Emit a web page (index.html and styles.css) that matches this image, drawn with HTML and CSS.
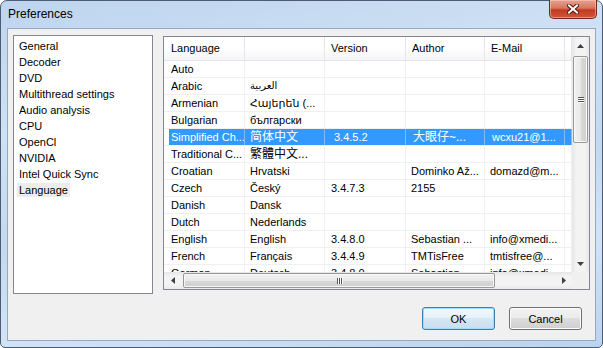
FILE: index.html
```html
<!DOCTYPE html>
<html lang="en">
<head>
  <meta charset="UTF-8">
  <title>Preferences</title>
  <link rel="stylesheet" href="styles.css">
</head>
<body>
  <div class="window">
    <div class="titlebar">
      <span class="title">Preferences</span>
      <div class="close">
        <svg width="12" height="10" viewBox="0 0 12 10">
          <path d="M2 1.5 L10 8.5 M10 1.5 L2 8.5" stroke="#4a1a12" stroke-width="4" stroke-linecap="square"/>
          <path d="M2 1.5 L10 8.5 M10 1.5 L2 8.5" stroke="#fff" stroke-width="2" stroke-linecap="square"/>
        </svg>
      </div>
    </div>

    <div class="client">
      <div class="main">
        <!-- Lista de seções -->
        <ul class="tree">
          <li><span>General</span></li>
          <li><span>Decoder</span></li>
          <li><span>DVD</span></li>
          <li><span>Multithread settings</span></li>
          <li><span>Audio analysis</span></li>
          <li><span>CPU</span></li>
          <li><span>OpenCl</span></li>
          <li><span>NVIDIA</span></li>
          <li><span>Intel Quick Sync</span></li>
          <li class="current"><span>Language</span></li>
        </ul>

        <div class="listview">
          <div class="lv-body">
            <div class="lv-header">
              <span>Language</span><span></span><span>Version</span><span>Author</span><span>E-Mail</span><span></span>
            </div>
            <div class="lv-row"><span>Auto</span><span></span><span></span><span></span><span></span><span></span></div>
            <div class="lv-row"><span>Arabic</span><span class="ar"><bdi dir="rtl">العربية</bdi></span><span></span><span></span><span></span><span></span></div>
            <div class="lv-row"><span>Armenian</span><span>Հայերեն (...</span><span></span><span></span><span></span><span></span></div>
            <div class="lv-row"><span>Bulgarian</span><span>български</span><span></span><span></span><span></span><span></span></div>
            <div class="lv-row selected"><span>Simplified Ch...</span><span class="cjk">简体中文</span><span>3.4.5.2</span><span class="cjk">大眼仔~...</span><span>wcxu21@1...</span><span></span></div>
            <div class="lv-row"><span>Traditional C...</span><span class="cjk">繁體中文...</span><span></span><span></span><span></span><span></span></div>
            <div class="lv-row"><span>Croatian</span><span>Hrvatski</span><span></span><span>Dominko Až...</span><span>domazd@m...</span><span></span></div>
            <div class="lv-row"><span>Czech</span><span>Český</span><span>3.4.7.3</span><span>2155</span><span></span><span></span></div>
            <div class="lv-row"><span>Danish</span><span>Dansk</span><span></span><span></span><span></span><span></span></div>
            <div class="lv-row"><span>Dutch</span><span>Nederlands</span><span></span><span></span><span></span><span></span></div>
            <div class="lv-row"><span>English</span><span>English</span><span>3.4.8.0</span><span>Sebastian ...</span><span>info@xmedi...</span><span></span></div>
            <div class="lv-row"><span>French</span><span>Français</span><span>3.4.4.9</span><span>TMTisFree</span><span>tmtisfree@...</span><span></span></div>
            <div class="lv-row"><span>German</span><span>Deutsch</span><span>3.4.8.0</span><span>Sebastian ...</span><span>info@xmedi...</span><span></span></div>
          </div>

          <!-- Barra de rolagem vertical -->
          <div class="vscroll">
            <div class="sb-btn">
              <svg width="7" height="4" viewBox="0 0 7 4"><path d="M0 4 L3.5 0 L7 4 Z" fill="#404040"/></svg>
            </div>
            <div class="sb-track">
              <div class="thumb-v"><i></i><i></i><i></i></div>
            </div>
            <div class="sb-btn">
              <svg width="7" height="4" viewBox="0 0 7 4"><path d="M0 0 L3.5 4 L7 0 Z" fill="#404040"/></svg>
            </div>
          </div>

          <!-- Barra de rolagem horizontal -->
          <div class="hscroll">
            <div class="sb-btn">
              <svg width="4" height="7" viewBox="0 0 4 7"><path d="M4 0 L0 3.5 L4 7 Z" fill="#404040"/></svg>
            </div>
            <div class="sb-track">
              <div class="thumb-h"><i></i><i></i><i></i></div>
            </div>
            <div class="sb-btn">
              <svg width="4" height="7" viewBox="0 0 4 7"><path d="M0 0 L4 3.5 L0 7 Z" fill="#404040"/></svg>
            </div>
          </div>
          <div class="corner"></div>
        </div>
      </div>

      <div class="buttons">
        <button class="btn btn-default">OK</button>
        <button class="btn">Cancel</button>
      </div>
    </div>
  </div>
</body>
</html>
```

FILE: styles.css
```css
* {
  margin: 0;
  padding: 0;
  box-sizing: border-box;
}

body {
  background-color: #ffffff;
  font-family: "Liberation Sans", "DejaVu Sans", "Noto Sans CJK SC", sans-serif;
  font-size: 11px;
  color: #000;
}

.window {
  width: 603px;
  height: 348px;
  border: 1px solid #4c5c72;
  border-radius: 7px 7px 5px 5px;
  padding: 0 6px 6px 6px;
  background: linear-gradient(170deg, #bed5ef 0%, #cfe1f4 30%, #c3d9f1 55%, #d2e3f5 75%, #bcd3ee 100%);
  display: flex;
  flex-direction: column;
}

.titlebar {
  height: 27px;
  margin: 0 -6px;
  display: flex;
  justify-content: space-between;
  align-items: flex-start;
}

.title {
  padding-left: 7px;
  line-height: 27px;
  font-size: 12px;
  color: #000;
}

.close {
  width: 48px;
  height: 19px;
  margin-top: -1px;
  margin-right: 5px;
  border: 1px solid #6b2a1e;
  border-top: none;
  border-radius: 0 0 5px 5px;
  background: linear-gradient(#e7a291 0%, #d6775f 45%, #c23b22 55%, #cf5636 100%);
  box-shadow: inset 0 0 0 1px rgba(255, 210, 200, 0.5);
  display: flex;
  align-items: center;
  justify-content: center;
}

.client {
  flex: 1;
  border: 1px solid #93a8c2;
  background-color: #f0f0f0;
  padding: 6px 5px 0 5px;
}

.main {
  display: flex;
  gap: 10px;
  height: 259px;
}

.tree {
  list-style: none;
  width: 140px;
  height: 259px;
  background-color: #fff;
  border: 1px solid #828790;
  padding-top: 1px;
}

.tree li {
  height: 16px;
  line-height: 16px;
  padding-left: 3px;
}

.tree li span {
  display: inline-block;
  padding: 0 2px;
  line-height: 14px;
  vertical-align: middle;
}

.tree li.current span {
  background-color: #ececec;
}

.listview {
  width: 427px;
  height: 254px;
  margin-top: 1px;
  border: 1px solid #828790;
  background-color: #fff;
  display: grid;
  grid-template-columns: 408px 17px;
  grid-template-rows: 235px 17px;
}

.lv-body {
  overflow: hidden;
}

.lv-header, .lv-row {
  display: grid;
  grid-template-columns: 81px 80px 81px 79px 80px 1fr;
}

.lv-header {
  height: 24px;
  background: linear-gradient(#ffffff 0%, #ffffff 45%, #f4f5f7 100%);
  border-bottom: 1px solid #e5e5e5;
}

.lv-header span {
  line-height: 23px;
  padding-left: 6px;
  border-right: 1px solid #e5e5e5;
  white-space: nowrap;
}

.lv-header span:first-child {
  padding-left: 7px;
}

.lv-row {
  height: 17px;
  border-bottom: 1px solid #f0f0f0;
}

.lv-row span {
  line-height: 16px;
  padding-left: 5px;
  border-right: 1px solid #f0f0f0;
  white-space: nowrap;
  overflow: hidden;
  text-align: left;
}

.lv-row span:first-child {
  padding-left: 7px;
}

.lv-row span:nth-child(3) {
  padding-left: 6px;
}

.lv-row .cjk {
  font-size: 12px;
}

.lv-row .ar {
  font-family: "DejaVu Sans", sans-serif;
  font-size: 10px;
}

.lv-row.selected span {
  background-color: #3399ff;
  color: #fff;
  border-right-color: #7fbcf8;
}

.lv-row.selected span:first-child {
  background: linear-gradient(to right, #fff 5px, #3399ff 5px);
}

.lv-row.selected span:nth-child(3) {
  padding-left: 9px;
}

.lv-row.selected span:nth-child(4),
.lv-row.selected span:nth-child(5) {
  padding-left: 7px;
}

/* Barras de rolagem */
.vscroll {
  display: flex;
  flex-direction: column;
  background: linear-gradient(to right, #e6e6e6, #f3f3f3 25%, #f3f3f3 75%, #e9e9e9);
}

.hscroll {
  display: flex;
  background: linear-gradient(#e6e6e6, #f3f3f3 25%, #f3f3f3 75%, #e9e9e9);
}

.corner {
  background-color: #f0f0f0;
}

.sb-btn {
  width: 17px;
  height: 17px;
  display: flex;
  align-items: center;
  justify-content: center;
  flex-shrink: 0;
}

.sb-track {
  flex: 1;
  display: flex;
}

.vscroll .sb-track {
  flex-direction: column;
}

.thumb-v, .thumb-h {
  border: 1px solid #979797;
  border-radius: 2px;
  box-shadow: inset 0 0 0 1px #f8f8f8;
  display: flex;
  align-items: center;
  justify-content: center;
  gap: 1px;
}

.thumb-v {
  margin: 2px 1px 0 1px;
  height: 87px;
  flex-direction: column;
  background: linear-gradient(to right, #f2f2f2, #e8e8e8 50%, #d9d9d9 52%, #cfcfcf);
}

.thumb-h {
  margin: 1px 0 1px 2px;
  width: 312px;
  background: linear-gradient(#f2f2f2, #e8e8e8 50%, #d9d9d9 52%, #cfcfcf);
}

.thumb-v i {
  display: block;
  width: 6px;
  height: 1px;
  background-color: #555;
  box-shadow: 0 1px 0 #fff;
}

.thumb-h i {
  display: block;
  width: 1px;
  height: 6px;
  background-color: #555;
  box-shadow: 1px 0 0 #fff;
}

/* Botões */
.buttons {
  display: flex;
  justify-content: flex-end;
  gap: 14px;
  margin-top: 13px;
  padding-right: 8px;
}

.btn {
  width: 73px;
  height: 23px;
  font-family: "Liberation Sans", sans-serif;
  font-size: 11px;
  color: #000;
  border: 1px solid #707070;
  border-radius: 3px;
  background: linear-gradient(#f2f2f2 0%, #ebebeb 50%, #dddddd 50%, #cfcfcf 100%);
  box-shadow: inset 0 0 0 1px #fcfcfc;
}

.btn-default {
  border-color: #3c7fb1;
  background: linear-gradient(#f3f8fc 0%, #e6f0f8 50%, #d6e6f3 50%, #c9def0 100%);
  box-shadow: inset 0 0 0 1px #9fdcf8;
}
```
